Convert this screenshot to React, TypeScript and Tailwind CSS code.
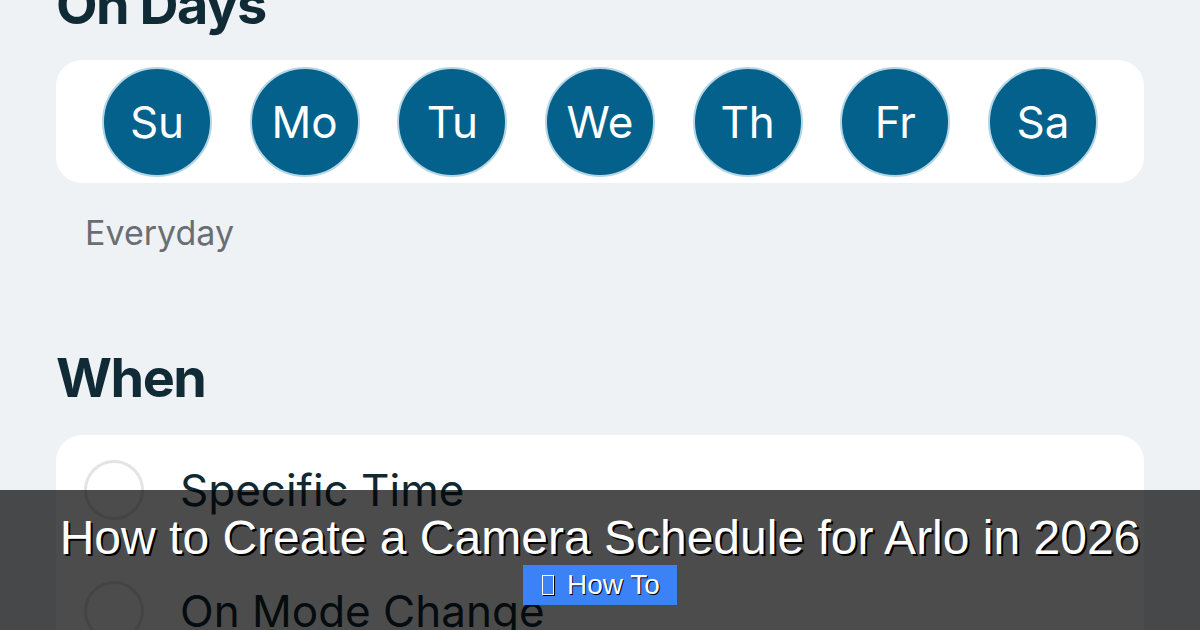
import React from "react";

const days = ["Su", "Mo", "Tu", "We", "Th", "Fr", "Sa"];
const options = ["Specific Time", "On Mode Change"];

function DayCircle({ label }: { label: string }) {
  return (
    <div className="w-[110px] h-[110px] rounded-full bg-[#03618c] border-2 border-[#b4d6e4] flex items-center justify-center">
      <span className="text-white text-[44px] leading-none">{label}</span>
    </div>
  );
}

export default function App() {
  return (
    <div
      className="relative w-[1200px] h-[630px] overflow-hidden bg-[#eef2f5]"
      style={{ fontFamily: "Inter, 'Noto Sans', sans-serif" }}
    >
      {/* background app screen */}
      <div className="flex flex-col px-[56px]">
        <h2 className="mt-[-22px] text-[54px] font-bold leading-none tracking-[-1.5px] text-[#102b36]">
          On Days
        </h2>

        <div className="mt-[28px] h-[123px] rounded-[26px] bg-white flex items-center justify-between px-[46px]">
          {days.map((d) => (
            <DayCircle key={d} label={d} />
          ))}
        </div>

        <p className="mt-[33px] pl-[29px] text-[34px] leading-none text-[#6a6e72]">Everyday</p>

        <h2 className="mt-[101px] text-[54px] font-bold leading-none tracking-[-1.5px] text-[#102b36]">
          When
        </h2>

        <div className="mt-[30px] rounded-[26px] bg-white flex flex-col gap-[11px] pl-[28px]">
          {options.map((o) => (
            <div key={o} className="h-[110px] flex items-center gap-[36px]">
              <div className="w-[60px] h-[60px] rounded-full border-[3px] border-[#e4e4e4]" />
              <span className="text-[44px] leading-none text-[#0f2a33]">{o}</span>
            </div>
          ))}
        </div>
      </div>

      {/* title overlay */}
      <div
        className="absolute left-0 right-0 bottom-0 h-[140px] bg-black/70 flex flex-col items-center"
        style={{ fontFamily: "'Liberation Sans', Arial, sans-serif" }}
      >
        <h1 className="mt-[21px] text-[48px] leading-[54px] text-white [text-shadow:2px_2px_0_#000]">
          How to Create a Camera Schedule for Arlo in 2026
        </h1>
        <div className="h-[40px] pl-[19px] pr-[17px] bg-[#3b82f6] flex items-center gap-[13px] text-white text-[28px] leading-none [text-shadow:1px_1px_0_#000]">
          <span className="inline-block w-[12px] h-[20px] border border-white [box-shadow:1px_1px_0_#000]" />
          <span>How To</span>
        </div>
      </div>
    </div>
  );
}
